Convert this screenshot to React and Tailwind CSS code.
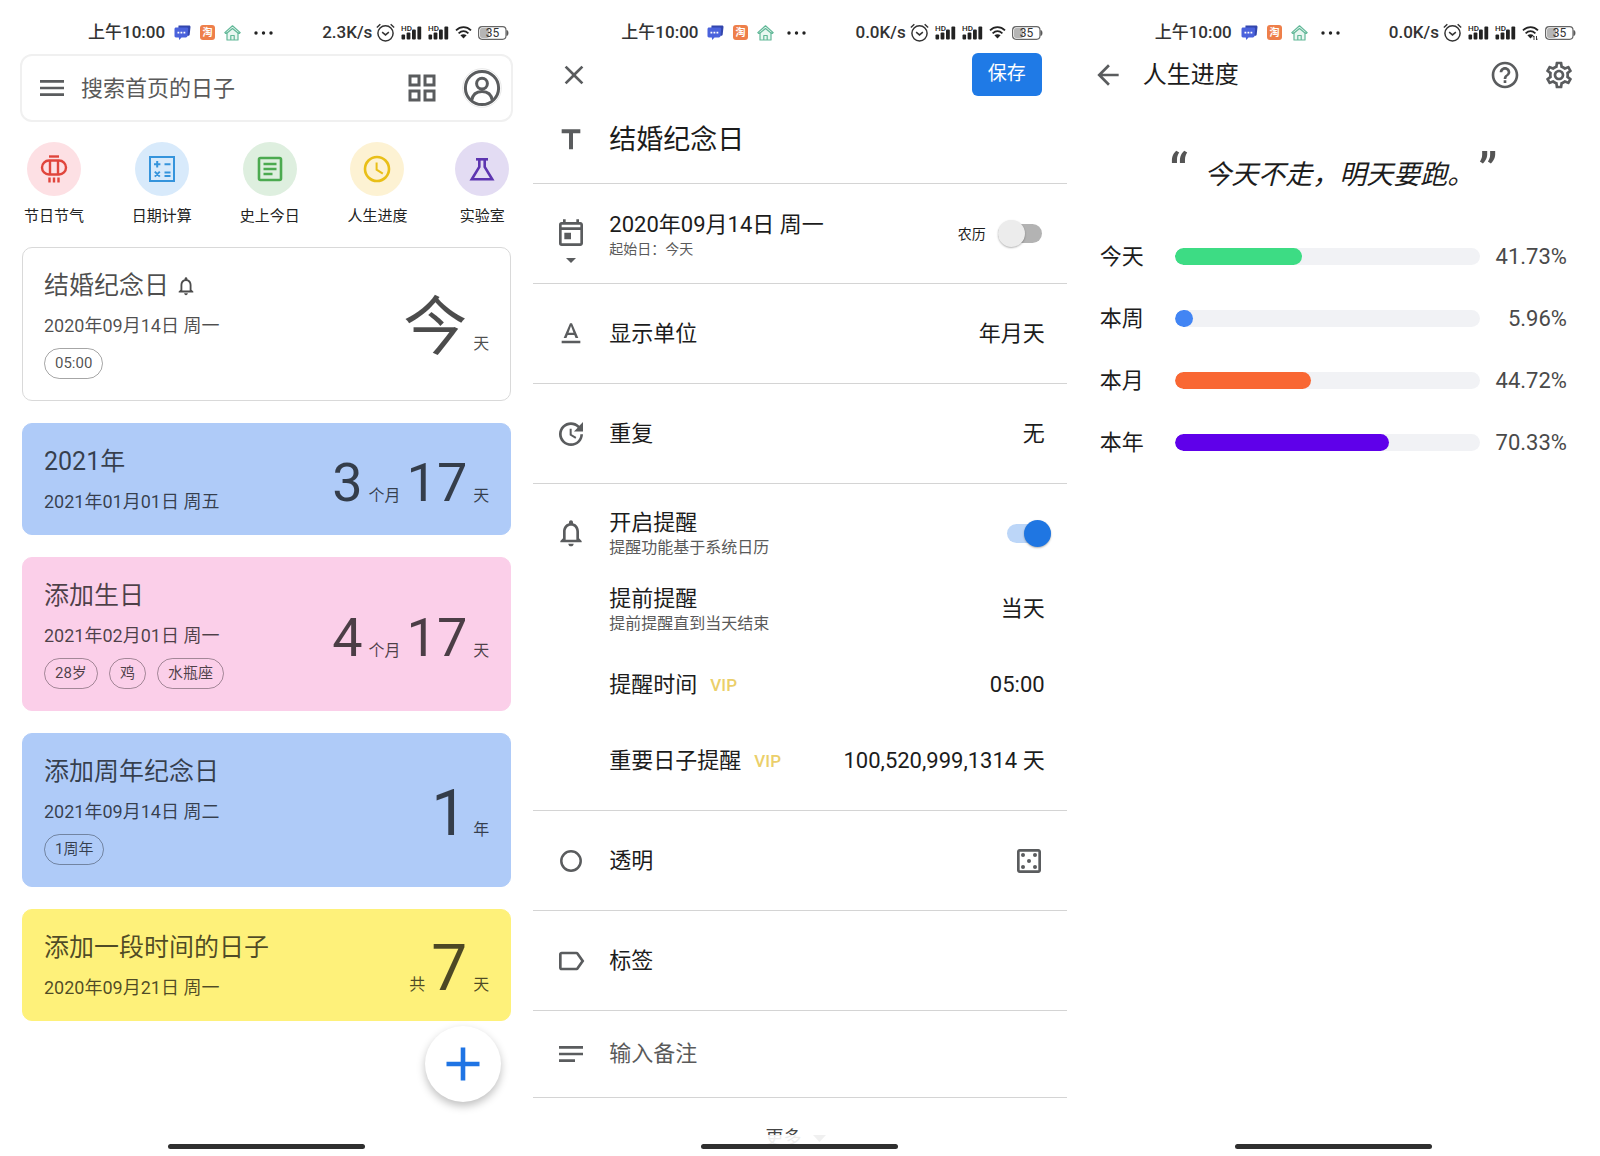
import { useState } from "react"
import {
  MdMenu,
  MdOutlineGridView,
  MdNotificationsNone,
  MdClose,
  MdTitle,
  MdOutlineToday,
  MdTextFormat,
  MdUpdate,
  MdOutlineCasino,
  MdLabelOutline,
  MdNotes,
  MdArrowBack,
  MdHelpOutline,
  MdOutlineSettings,
} from "react-icons/md"

const shortcuts = [
  { label: "节日节气", bg: "bg-[#fde0e4]", text: "text-[#e0453c]", icon: <LanternIcon /> },
  { label: "日期计算", bg: "bg-[#d8eafb]", text: "text-[#3594dc]", icon: <CalcIcon /> },
  { label: "史上今日", bg: "bg-[#deefdf]", text: "text-[#4caa50]", icon: <ArticleIcon /> },
  { label: "人生进度", bg: "bg-[#fdf2d3]", text: "text-[#e9bf17]", icon: <ClockIcon /> },
  { label: "实验室", bg: "bg-[#e3dcf3]", text: "text-[#5d35b0]", icon: <FlaskIcon /> },
]

const days = [
  {
    title: "结婚纪念日",
    date: "2020年09月14日 周一",
    bell: true,
    tags: ["05:00"],
    count: [{ value: "今", unit: "天" }],
    card: "border border-[#d9d9d9] bg-white",
  },
  {
    title: "2021年",
    date: "2021年01月01日 周五",
    tags: [],
    count: [{ value: "3", unit: "个月" }, { value: "17", unit: "天" }],
    card: "border border-[#afcbf8] bg-[#afcbf8]",
  },
  {
    title: "添加生日",
    date: "2021年02月01日 周一",
    tags: ["28岁", "鸡", "水瓶座"],
    count: [{ value: "4", unit: "个月" }, { value: "17", unit: "天" }],
    card: "border border-[#fbcfe9] bg-[#fbcfe9]",
  },
  {
    title: "添加周年纪念日",
    date: "2021年09月14日 周二",
    tags: ["1周年"],
    count: [{ value: "1", unit: "年" }],
    card: "border border-[#afcbf8] bg-[#afcbf8]",
  },
  {
    title: "添加一段时间的日子",
    date: "2020年09月21日 周一",
    tags: [],
    prefix: "共",
    count: [{ value: "7", unit: "天" }],
    card: "border border-[#fef17a] bg-[#fef17a]",
  },
]

const progress = [
  { label: "今天", value: 41.73, color: "bg-[#3ddc84]" },
  { label: "本周", value: 5.96, color: "bg-[#4285f4]" },
  { label: "本月", value: 44.72, color: "bg-[#f96733]" },
  { label: "本年", value: 70.33, color: "bg-[#5f00ea]" },
]

/* ---------- icons ---------- */

function LanternIcon() {
  return (
    <svg width="28" height="28" viewBox="0 0 28 28" fill="none" stroke="currentColor" strokeWidth="2.4">
      <path d="M9 1.5h10" />
      <rect x="2" y="5.5" width="24" height="14" rx="7" />
      <path d="M10 5.5v14M18 5.5v14" />
      <path d="M9.5 22.5v5M14 22.5v5M18.5 22.5v5" />
    </svg>
  )
}

function CalcIcon() {
  return (
    <svg width="28" height="28" viewBox="0 0 28 28" fill="none" stroke="currentColor" strokeWidth="2">
      <rect x="2" y="2" width="24" height="24" />
      <path d="M6 9.2h6.4M9.2 6v6.4M16.5 9.2h6M6.8 16.6l5 5M11.8 16.6l-5 5M16.5 17.4h6M16.5 21h6" />
    </svg>
  )
}

function ArticleIcon() {
  return (
    <svg width="28" height="28" viewBox="0 0 28 28" fill="none" stroke="currentColor" strokeWidth="2.6">
      <rect x="3" y="3" width="22" height="22" rx="1.5" />
      <path d="M7.5 9h13M7.5 14h13M7.5 19h9" strokeWidth="2.4" />
    </svg>
  )
}

function ClockIcon() {
  return (
    <svg width="28" height="28" viewBox="0 0 28 28" fill="none" stroke="currentColor" strokeWidth="2.6">
      <circle cx="14" cy="14" r="12" />
      <path d="M13.6 7.5v7.2l6.2 4" strokeWidth="2" />
    </svg>
  )
}

function FlaskIcon() {
  return (
    <svg width="28" height="28" viewBox="0 0 28 28" fill="none" stroke="currentColor" strokeWidth="2.6">
      <path d="M8 4.3h12" />
      <path d="M11.3 4.5v7.5L3.8 24.2h20.4L16.7 12V4.5" />
    </svg>
  )
}

function ProfileIcon() {
  return (
    <svg width="40" height="40" viewBox="0 0 40 40" fill="none" stroke="#5a5c5e">
      <circle cx="20" cy="20" r="19.3" stroke="#e8e8e8" strokeWidth="1" />
      <circle cx="20" cy="20" r="16.6" strokeWidth="3" />
      <circle cx="20" cy="15.6" r="5.4" strokeWidth="3" />
      <path d="M9.6 32.4c1-6 5-9 10.4-9s9.4 3 10.4 9" strokeWidth="3" />
    </svg>
  )
}

function AlarmIcon() {
  return (
    <svg width="19" height="19" viewBox="0 0 18 18" fill="none" stroke="#333" strokeWidth="1.4">
      <circle cx="9" cy="9.8" r="7.2" />
      <path d="M5.8 8.7L9 11.3l3.2-2.6M0.8 4.2L4.1 1.2M17.2 4.2l-3.3-3" />
    </svg>
  )
}

function SignalIcon() {
  return (
    <svg width="21" height="16" viewBox="0 0 21 16" fill="#222">
      <text x="0" y="6" fontSize="8" fontWeight="500">HD</text>
      <rect x="0.5" y="9.5" width="3.6" height="5" rx="1" />
      <rect x="5.6" y="7.5" width="3.8" height="7" rx="1" />
      <rect x="11" y="4.5" width="3.8" height="10" rx="1" />
      <rect x="16.4" y="1.5" width="3.8" height="13" rx="1" />
    </svg>
  )
}

function WifiIcon({ busy }) {
  return (
    <svg width="17" height="16" viewBox="0 0 17 16" fill="none" stroke="#222" strokeWidth="1.8">
      <path d="M1 5.3c4.5-4.2 10.5-4.2 15 0M3.6 8.3c3-2.7 6.8-2.7 9.8 0" />
      <path d="M5.4 10.3c2-1.5 4.2-1.5 6.2 0L8.5 13.5z" fill="#222" stroke="none" />
      {busy && <path d="M12 11v4M11 12.2l1-1.2M14.5 11v4M15.5 13.8l-1 1.2" strokeWidth="0.9" />}
    </svg>
  )
}

function BatteryIcon() {
  return (
    <svg width="31" height="14" viewBox="0 0 31 14" fill="none">
      <rect x="2" y="2" width="9" height="10" rx="2" fill="#b5b5b5" />
      <rect x="0.6" y="0.7" width="27.4" height="12.6" rx="3.5" stroke="#666" strokeWidth="1.2" />
      <path d="M29 4.5c1.3 1 1.3 4 0 5z" fill="#555" stroke="#555" />
      <text x="14.5" y="11" fontSize="12" fontWeight="400" textAnchor="middle" fill="#333">35</text>
    </svg>
  )
}

function ChatIcon() {
  return (
    <svg width="17" height="16" viewBox="0 0 17 16">
      <path d="M4.5 0.5H15c1 0 1.6.7 1.5 1.6l-.8 7.4c-.1.8-.7 1.3-1.5 1.3H4z" fill="#3346ad" />
      <path d="M2 2.5h10.8c.9 0 1.5.7 1.4 1.5l-.7 7c-.1.8-.8 1.4-1.6 1.4H7.5L5.2 15l-.4-2.6H1.9c-.8 0-1.4-.6-1.4-1.4V4c0-.8.6-1.5 1.5-1.5z" fill="#4a62dc" />
      <path d="M3.5 7.6h1.8M6.5 7.6h1.8M9.5 7.6h1.8" stroke="#fff" strokeWidth="1.6" />
    </svg>
  )
}

function TaoIcon() {
  return (
    <svg width="15" height="15" viewBox="0 0 15 15">
      <rect width="15" height="15" rx="3" fill="#ee7f4a" />
      <text x="7.5" y="11" fontSize="10" fontWeight="700" textAnchor="middle" fill="#fff">淘</text>
    </svg>
  )
}

function HouseIcon() {
  return (
    <svg width="17" height="16" viewBox="0 0 17 16" fill="none" stroke="#62b898" strokeWidth="1.2" strokeLinejoin="round">
      <path d="M8.5 0.8L0.8 7.6l1 .9 1.2-.8v7.3h11V7.7l1.2.8 1-.9z" fill="#e9f7f1" />
      <path d="M8.5 3.5L3 8M8.5 3.5L14 8M6.8 15v-4.5h3.4V15" />
    </svg>
  )
}

/* ---------- shared ---------- */

function StatusBar({ speed, busy }) {
  return (
    <div className="flex h-[52px] items-center justify-between pt-[13px] pr-6 pl-[88px] text-[17px] font-medium text-[#333]">
      <div className="flex items-center gap-[9px]">
        <span>上午10:00</span>
        <ChatIcon />
        <TaoIcon />
        <HouseIcon />
        <svg width="19" height="4" viewBox="0 0 19 4" fill="#222" className="ml-1">
          <circle cx="2" cy="2" r="1.7" />
          <circle cx="9.5" cy="2" r="1.7" />
          <circle cx="17" cy="2" r="1.7" />
        </svg>
      </div>
      <div className="flex items-center gap-[6px]">
        <span className="-mr-[2px]">{speed}</span>
        <AlarmIcon />
        <SignalIcon />
        <SignalIcon />
        <WifiIcon busy={busy} />
        <BatteryIcon />
      </div>
    </div>
  )
}

function Screen({ children }) {
  return (
    <section className="relative flex min-w-0 flex-col overflow-hidden bg-white">
      {children}
      {/* Gesture bar */}
      <div className="absolute inset-x-0 bottom-0 flex h-[21px] justify-center bg-white/90 pt-[9px]">
        <span className="h-[5px] w-[197px] rounded-full bg-[#2f2f2f]" />
      </div>
    </section>
  )
}

/* ---------- home ---------- */

function DayCard({ day }) {
  const numberSize = day.count.length > 1 ? "text-[54px]" : "text-[64px]"
  return (
    <article className={`flex items-center justify-between rounded-[10px] p-[21px] text-black/70 ${day.card}`}>
      <div>
        <h2 className="flex items-center gap-[6px] text-[25px] leading-[33px]">
          {day.title}
          {day.bell && <MdNotificationsNone size={22} />}
        </h2>
        <p className="mt-3 text-[18px] leading-[23px]">{day.date}</p>
        {day.tags.length > 0 && (
          <ul className="mt-[11px] flex gap-[11px]">
            {day.tags.map(tag => (
              <li key={tag} className="rounded-full border border-black/35 px-[10px] text-[15px] leading-[29px]">
                {tag}
              </li>
            ))}
          </ul>
        )}
      </div>
      <div className="flex items-baseline gap-[6px] pt-2 text-[16px] leading-5">
        {day.prefix && <span>{day.prefix}</span>}
        {day.count.map(part => (
          <div key={part.unit} className="flex items-baseline gap-[6px]">
            <span className={`leading-[60px] ${numberSize}`}>{part.value}</span>
            <span>{part.unit}</span>
          </div>
        ))}
      </div>
    </article>
  )
}

function HomeScreen() {
  return (
    <Screen>
      <StatusBar speed="2.3K/s" />

      {/* Search */}
      <div className="mx-5 mt-[2px] flex h-[68px] items-center rounded-xl border-2 border-[#f0f0f0] pr-[9px] pl-[14px] text-[#5a5c5e]">
        <button type="button" aria-label="菜单">
          <MdMenu size={32} />
        </button>
        <input
          type="search"
          aria-label="搜索首页的日子"
          placeholder="搜索首页的日子"
          className="ml-[13px] min-w-0 flex-1 text-[22px] outline-none placeholder:text-[#5a5a5a]"
        />
        <button type="button" aria-label="视图">
          <MdOutlineGridView size={36} />
        </button>
        <button type="button" aria-label="账号" className="ml-[22px]">
          <ProfileIcon />
        </button>
      </div>

      {/* Shortcuts */}
      <nav className="mt-5 flex justify-between px-6">
        {shortcuts.map(s => (
          <a key={s.label} href="#" className="flex flex-col items-center">
            <span className={`flex size-[54px] items-center justify-center rounded-full ${s.bg} ${s.text}`}>
              {s.icon}
            </span>
            <span className="mt-[9px] text-[15px] leading-[22px] text-[#222]">{s.label}</span>
          </a>
        ))}
      </nav>

      {/* Days */}
      <div className="mx-[22px] mt-5 flex flex-col gap-[22px]">
        {days.map(day => <DayCard key={day.title} day={day} />)}
      </div>

      <button
        type="button"
        aria-label="添加"
        className="absolute right-8 bottom-[54px] flex size-[76px] items-center justify-center rounded-full bg-white shadow-[0_4px_8px_rgba(0,0,0,0.25)]"
      >
        <svg width="34" height="34" viewBox="0 0 34 34" stroke="#1f74e4" strokeWidth="4.6">
          <path d="M17 0.5v33M0.5 17h33" />
        </svg>
      </button>
    </Screen>
  )
}

/* ---------- edit ---------- */

function Switch({ id, checked, onChange }) {
  return (
    <span className="relative flex h-7 w-[44px] items-center">
      <input
        id={id}
        type="checkbox"
        role="switch"
        checked={checked}
        onChange={onChange}
        className="peer absolute inset-0 z-10 cursor-pointer opacity-0"
      />
      <span className="h-[19px] w-full rounded-full bg-[#b3b3b3] peer-checked:bg-[#bcd6f8]" />
      <span className="absolute left-0 size-[27px] rounded-full bg-[#ececec] shadow-[0_1px_2px_rgba(0,0,0,0.3)] peer-checked:right-0 peer-checked:left-auto peer-checked:bg-[#1f76e2]" />
    </span>
  )
}

function Row({ icon, children, className = "h-[100px] pr-[22px]" }) {
  return (
    <div className={`flex items-center border-b border-[#d4d4d4] pl-[22px] ${className}`}>
      <span className="mr-[22px] w-8 shrink-0 text-[#5a5c5e]">{icon}</span>
      {children}
    </div>
  )
}

function SubRow({ children }) {
  return <div className="flex h-[76px] items-center pr-[22px] pl-[76px]">{children}</div>
}

function EditScreen() {
  const [lunar, setLunar] = useState(false)
  const [remind, setRemind] = useState(true)

  return (
    <Screen>
      <StatusBar speed="0.0K/s" />

      <header className="flex h-[45px] items-center justify-between px-[25px]">
        <button type="button" aria-label="关闭" className="text-[#5a5c5e]">
          <MdClose size={32} />
        </button>
        <button type="button" className="h-[43px] w-[70px] rounded-md bg-[#1f7ae6] text-[19px] text-white">
          保存
        </button>
      </header>

      <div className="text-[22px] leading-7 text-[#1c1c1c]">
        <Row icon={<MdTitle size={32} />} className="h-[87px] pr-[22px]">
          <input
            aria-label="名称"
            defaultValue="结婚纪念日"
            className="min-w-0 flex-1 text-[27px] leading-9 outline-none"
          />
        </Row>

        <Row
          className="h-[100px] pr-[25px]"
          icon={
            <span className="relative block">
              <MdOutlineToday size={32} />
              <svg width="10" height="5" viewBox="0 0 10 5" className="absolute top-10 left-[11px]">
                <path d="M0 0h10L5 5z" fill="currentColor" />
              </svg>
            </span>
          }
        >
          <div className="flex-1 pt-[3px]">
            <p>2020年09月14日 周一</p>
            <p className="text-[14px] leading-[21px] text-[#5a5a5a]">起始日：今天</p>
          </div>
          <label htmlFor="lunar" className="mr-3 text-[14px]">农历</label>
          <Switch id="lunar" checked={lunar} onChange={e => setLunar(e.target.checked)} />
        </Row>

        <Row icon={<MdTextFormat size={32} />}>
          <span className="flex-1">显示单位</span>
          <span>年月天</span>
        </Row>

        <Row icon={<MdUpdate size={32} />}>
          <span className="flex-1">重复</span>
          <span>无</span>
        </Row>

        {/* Reminder */}
        <div className="border-b border-[#d4d4d4] py-[11px]">
          <div className="flex h-[76px] items-center pr-4 pl-[22px]">
            <MdNotificationsNone size={32} className="mr-[22px] text-[#5a5c5e]" />
            <label htmlFor="remind" className="flex-1">
              <span className="block">开启提醒</span>
              <span className="block text-[16px] leading-[21px] text-[#5a5a5a]">提醒功能基于系统日历</span>
            </label>
            <Switch id="remind" checked={remind} onChange={e => setRemind(e.target.checked)} />
          </div>
          <SubRow>
            <div className="flex-1">
              <p>提前提醒</p>
              <p className="text-[16px] leading-[21px] text-[#5a5a5a]">提前提醒直到当天结束</p>
            </div>
            <span>当天</span>
          </SubRow>
          <SubRow>
            <span>提醒时间</span>
            <span className="ml-[13px] flex-1 text-[17px] font-medium text-[#ebcf6a]">VIP</span>
            <span>05:00</span>
          </SubRow>
          <SubRow>
            <span>重要日子提醒</span>
            <span className="ml-[13px] flex-1 text-[17px] font-medium text-[#ebcf6a]">VIP</span>
            <span>100,520,999,1314 天</span>
          </SubRow>
        </div>

        <Row
          icon={
            <svg width="32" height="32" viewBox="0 0 32 32" fill="none" stroke="currentColor" strokeWidth="2.5">
              <circle cx="16" cy="16" r="9.7" />
            </svg>
          }
        >
          <span className="flex-1">透明</span>
          <button type="button" aria-label="随机颜色" className="text-[#5a5c5e]">
            <MdOutlineCasino size={32} />
          </button>
        </Row>

        <Row icon={<MdLabelOutline size={32} />}>
          <span>标签</span>
        </Row>

        <Row icon={<MdNotes size={32} />} className="h-[87px] pr-[22px]">
          <input
            aria-label="备注"
            placeholder="输入备注"
            className="min-w-0 flex-1 outline-none placeholder:text-[#5a5a5a]"
          />
        </Row>

        <button type="button" className="flex w-full items-center justify-center gap-3 pt-7 pr-2 pb-[6px] text-[18px] leading-6 text-[#444]">
          更多
          <svg width="13" height="7" viewBox="0 0 13 7">
            <path d="M0 0h13L6.5 7z" fill="#666" />
          </svg>
        </button>
      </div>
    </Screen>
  )
}

/* ---------- life progress ---------- */

function ProgressScreen() {
  return (
    <Screen>
      <StatusBar speed="0.0K/s" busy />

      <header className="flex h-[45px] items-center px-[25px] text-[#5a5c5e]">
        <button type="button" aria-label="返回">
          <MdArrowBack size={32} />
        </button>
        <h1 className="ml-[19px] flex-1 text-[24px] text-[#1c1c1c]">人生进度</h1>
        <button type="button" aria-label="帮助" className="mr-[22px]">
          <MdHelpOutline size={32} />
        </button>
        <button type="button" aria-label="设置">
          <MdOutlineSettings size={32} />
        </button>
      </header>

      <blockquote className="mt-[49px] flex h-[55px] items-start justify-center text-[#555]">
        <span className="mr-4 text-[50px] leading-[52px] font-medium">“</span>
        <p className="pt-[11px] text-[27px] leading-9 text-[#1c1c1c] italic">今天不走，明天要跑。</p>
        <span className="ml-1 text-[50px] leading-[52px] font-medium">”</span>
      </blockquote>

      <ul className="mt-6 px-[33px] text-[22px]">
        {progress.map(p => (
          <li key={p.label} className="flex h-[62px] items-center">
            <span className="w-[75px] text-[#1c1c1c]">{p.label}</span>
            <div
              role="progressbar"
              aria-label={p.label}
              aria-valuenow={p.value}
              className="h-[17px] flex-1 overflow-hidden rounded-full bg-[#f1f2f5]"
            >
              <div className={`h-full rounded-full ${p.color}`} style={{ width: `${p.value}%` }} />
            </div>
            <span className="w-[87px] text-right text-[#4a4a4a]">{p.value}%</span>
          </li>
        ))}
      </ul>
    </Screen>
  )
}

export default function App() {
  return (
    <main className="grid min-h-screen grid-cols-3 bg-white font-['Roboto','Noto_Sans_CJK_SC',sans-serif]">
      <HomeScreen />
      <EditScreen />
      <ProgressScreen />
    </main>
  )
}
